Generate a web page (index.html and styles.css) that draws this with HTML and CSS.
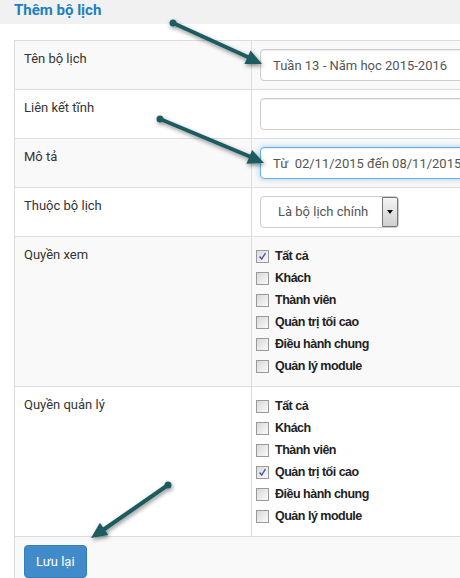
FILE: index.html
```html
<!DOCTYPE html>
<html lang="vi">
<head>
    <meta charset="UTF-8">
    <title>Thêm bộ lịch</title>
    <link rel="stylesheet" href="styles.css">
</head>
<body>

    <div class="page-header">
        <h2>Thêm bộ lịch</h2>
    </div>

    <div class="content">
        <table class="form-table">
            <tr class="odd">
                <td class="label">Tên bộ lịch</td>
                <td><div class="input">Tuần 13 - Năm học 2015-2016</div></td>
            </tr>
            <tr>
                <td class="label">Liên kết tĩnh</td>
                <td><div class="input"></div></td>
            </tr>
            <tr class="odd">
                <td class="label">Mô tả</td>
                <td><div class="input focus">Từ&nbsp; 02/11/2015 đến 08/11/2015</div></td>
            </tr>
            <tr>
                <td class="label">Thuộc bộ lịch</td>
                <td>
                    <div class="select">
                        <span class="select-text">Là bộ lịch chính</span>
                        <span class="select-btn"><span class="caret"></span></span>
                    </div>
                </td>
            </tr>
            <tr class="odd">
                <td class="label">Quyền xem</td>
                <td class="checks">
                    <div class="check"><span class="box checked"><svg viewBox="0 0 13 13"><path d="M3 6.5 L5.5 9.5 L10 2.5" /></svg></span>Tất cả</div>
                    <div class="check"><span class="box"></span>Khách</div>
                    <div class="check"><span class="box"></span>Thành viên</div>
                    <div class="check"><span class="box"></span>Quản trị tối cao</div>
                    <div class="check"><span class="box"></span>Điều hành chung</div>
                    <div class="check"><span class="box"></span>Quản lý module</div>
                </td>
            </tr>
            <tr>
                <td class="label">Quyền quản lý</td>
                <td class="checks">
                    <div class="check"><span class="box"></span>Tất cả</div>
                    <div class="check"><span class="box"></span>Khách</div>
                    <div class="check"><span class="box"></span>Thành viên</div>
                    <div class="check"><span class="box checked"><svg viewBox="0 0 13 13"><path d="M3 6.5 L5.5 9.5 L10 2.5" /></svg></span>Quản trị tối cao</div>
                    <div class="check"><span class="box"></span>Điều hành chung</div>
                    <div class="check"><span class="box"></span>Quản lý module</div>
                </td>
            </tr>
            <tr class="odd">
                <td colspan="2" class="submit-cell"><button class="btn">Lưu lại</button></td>
            </tr>
        </table>
    </div>

    <!-- annotation arrows drawn over the form -->
    <svg class="arrows" width="460" height="578" viewBox="0 0 460 578">
        <defs>
            <filter id="shadow" x="-20%" y="-20%" width="140%" height="140%">
                <feDropShadow dx="1" dy="2" stdDeviation="2" flood-color="#000" flood-opacity="0.45" />
            </filter>
        </defs>
        <g filter="url(#shadow)" fill="#1d5b60" stroke="#1d5b60">
            <line x1="173" y1="23" x2="250" y2="58" stroke-width="4" stroke-linecap="round" />
            <circle cx="173" cy="23" r="3.5" stroke="none" />
            <polygon points="262,64 244.4,64.1 250.6,50.5" stroke="none" />

            <line x1="160" y1="119" x2="251" y2="157" stroke-width="4" stroke-linecap="round" />
            <circle cx="160" cy="119" r="3.5" stroke="none" />
            <polygon points="264,163 246.4,163.7 252.2,149.9" stroke="none" />

            <line x1="168" y1="485" x2="103" y2="530" stroke-width="4" stroke-linecap="round" />
            <circle cx="168" cy="485" r="3.5" stroke="none" />
            <polygon points="91,538 99.9,522.7 108.4,535.1" stroke="none" />
        </g>
    </svg>

</body>
</html>
```

FILE: styles.css
```css
body {
    margin: 0;
    width: 460px;
    height: 578px;
    overflow: hidden;
    position: relative;
    font-family: Roboto, "Open Sans", Arial, sans-serif;
    font-size: 13px;
    color: #333;
    background: #fff;
}

.page-header {
    background-color: #f1f1f1;
    height: 24px;
    padding: 0 14px;
}

.page-header h2 {
    margin: 0;
    font-size: 15px;
    line-height: 20px;
    font-weight: bold;
    color: #1b80c0;
}

.content {
    padding: 16px 0 0 14px;
}

.form-table {
    border-collapse: collapse;
    width: 480px;
}

.form-table td {
    border: 1px solid #ddd;
    padding: 8px;
    vertical-align: top;
}

.form-table tr.odd td {
    background-color: #f9f9f9;
}

.form-table td.label {
    width: 219px;
    padding: 8px 8px 8px 9px;
    line-height: 20px;
    color: #333;
}

.input {
    box-sizing: border-box;
    height: 32px;
    border: 1px solid #ccc;
    border-radius: 4px;
    background: #fff;
    padding: 6px 12px;
    line-height: 19px;
    color: #555;
    box-shadow: inset 0 1px 1px rgba(0, 0, 0, 0.075);
}

.input.focus {
    border-color: #66afe9;
    box-shadow: inset 0 1px 1px rgba(0, 0, 0, 0.075), 0 0 6px rgba(102, 175, 233, 0.6);
}

.select {
    box-sizing: border-box;
    width: 139px;
    height: 32px;
    border: 1px solid #ccc;
    border-radius: 4px;
    background: #fff;
    display: flex;
    align-items: stretch;
    justify-content: space-between;
    color: #555;
}

.select-text {
    padding: 0 0 0 17px;
    line-height: 30px;
}

.select-btn {
    width: 14px;
    border: 1px solid #777;
    border-radius: 0 2px 2px 0;
    background: linear-gradient(#f4f4f4, #cfcfcf);
    display: flex;
    align-items: center;
    justify-content: center;
}

.caret {
    width: 0;
    height: 0;
    border-left: 3.5px solid transparent;
    border-right: 3.5px solid transparent;
    border-top: 4px solid #111;
}

.form-table td.checks {
    padding: 8px 4px 9px 4px;
}

.check {
    height: 22px;
    display: flex;
    align-items: center;
    font-family: "Liberation Sans", Arial, sans-serif;
    font-weight: bold;
    font-size: 12.5px;
    letter-spacing: -0.5px;
    color: #222;
}

.box {
    box-sizing: border-box;
    width: 13px;
    height: 13px;
    margin-right: 6px;
    border: 1px solid #9a9a9a;
    background: linear-gradient(135deg, #d9d9d9, #fafafa);
    display: inline-block;
}

.box svg {
    display: block;
    width: 11px;
    height: 11px;
}

.box svg path {
    fill: none;
    stroke: #4a55a8;
    stroke-width: 1.6;
}

.form-table td.submit-cell {
    padding: 8px 9px;
}

.btn {
    font-family: Roboto, "Open Sans", Arial, sans-serif;
    font-size: 13px;
    color: #fff;
    background-color: #428bca;
    border: 1px solid #357ebd;
    border-radius: 4px;
    padding: 7px 11px;
    line-height: 17px;
    cursor: pointer;
}

.arrows {
    position: absolute;
    left: 0;
    top: 0;
    pointer-events: none;
}
```
